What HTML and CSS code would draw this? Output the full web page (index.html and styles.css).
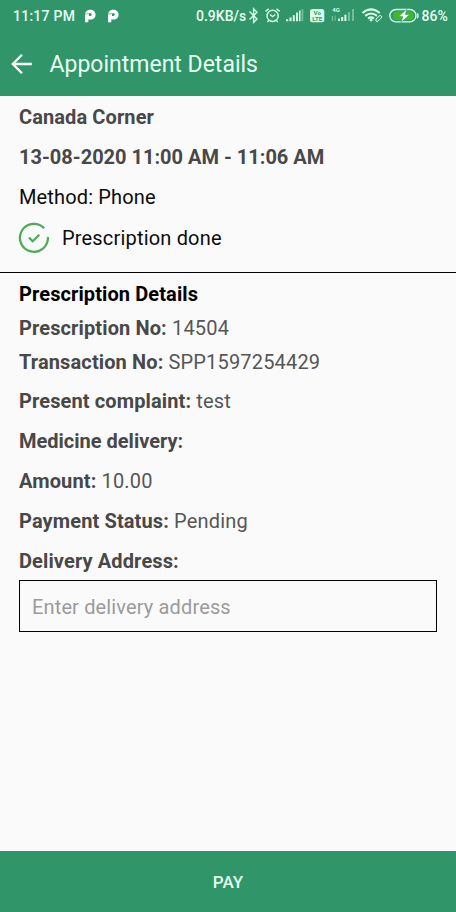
FILE: index.html
```html
<!DOCTYPE html>
<html lang="en">
<head>
<meta charset="utf-8">
<title>Appointment Details</title>
<link rel="stylesheet" href="styles.css">
</head>
<body>
<div class="screen">
  <header class="header">
    <div class="status">
      <span class="time">11:17 PM</span>
      <svg class="app" viewBox="0 0 12 14"><path fill-rule="evenodd" d="M1 13.3V6.2C1 3 3.1.8 6.2.8 9.4.8 11.6 2.9 11.6 5.7S9.4 10.5 6.4 10.5H4.3V13.3ZM4.9 4.2V7H6.3A1.5 1.4 0 0 0 6.3 4.2Z"/><path class="cut" d="M1 5.2L4.9 4.4"/></svg>
      <svg class="app" viewBox="0 0 12 14"><path fill-rule="evenodd" d="M1 13.3V6.2C1 3 3.1.8 6.2.8 9.4.8 11.6 2.9 11.6 5.7S9.4 10.5 6.4 10.5H4.3V13.3ZM4.9 4.2V7H6.3A1.5 1.4 0 0 0 6.3 4.2Z"/><path class="cut" d="M1 5.2L4.9 4.4"/></svg>
      <span class="speed">0.9KB/s</span>
      <svg class="system" viewBox="246 0 174 32">
        <path class="line" d="M249.5 11.6L257 19L253.6 22.4V8.8L257 12.2L249.5 19.6"/>
        <g class="line"><circle cx="272.6" cy="15.9" r="5.6"/><path d="M270 14.5L272.6 16.7L275.3 14.5M265.6 11.4L268.7 8.8M279.6 11.4L276.5 8.8M268.7 20.6L267.4 22M276.5 20.6L277.8 22"/></g>
        <path class="fill" d="M286.2 19.2h2v2h-2zM289.5 17.6h2v3.6h-2zM292.8 15.2h2v6h-2zM296 12.6h2v8.6h-2zM299 10.5h1.5v10.7h-1.5z"/><path class="fill dim" d="M301.5 9.2h1.8v12h-1.8z"/>
        <rect class="fill" x="310" y="9" width="14.3" height="13.3" rx="2.5"/>
        <text class="volte" x="317.2" y="14.9">Vo</text><text class="volte" x="317.2" y="21.3">LTE</text>
        <text class="network" x="332.2" y="11.9">4G</text>
        <path class="fill" d="M338 18.6h2v2.4h-2zM341.2 17h2v4h-2zM344.4 14.8h2v6.2h-2z"/><path class="fill dim" d="M348 12h2v9h-2zM352 9h2v12h-2zM331.8 16h1.3v5h-1.3zM334.6 15.5h1v5.5h-1z"/>
        <g class="wifi"><path d="M362.5 13Q371 5.7 379.7 13M365.2 15.9Q371.1 11.2 377 15.9M368 18.5Q371 16.2 374 18.5"/><path class="fill" d="M369.3 20L371.1 18.3L373 20L371.1 21.8Z"/></g>
        <path class="link" d="M375.9 19.2L378.8 16.2Q380.4 14.8 381.4 16Q382.2 17.2 380.8 18.5L378.1 21Q376.8 22 376 21Q375.2 20 376.6 18.8"/>
        <rect class="battery" x="389.8" y="9.5" width="26.2" height="12.4" rx="6.2"/><path class="tip" d="M417.5 13.2Q418.6 15.7 417.5 18.2"/>
        <rect class="charge" x="393" y="11.5" width="20.5" height="8.4" rx="3"/><path class="bolt" d="M407 8.8L398.8 16.6H402.8L401 22.4L409.8 14.5H405.4Z"/>
      </svg>
      <span class="percent">86%</span>
    </div>
    <div class="toolbar">
      <svg class="back" viewBox="0 0 22 22"><path d="M20.8 11H2M11 1.8L1.8 11L11 20.2"/></svg>
      <h1>Appointment Details</h1>
    </div>
  </header>
  <main>
    <section class="summary">
      <p class="strong place">Canada Corner</p>
      <p class="strong date">13-08-2020 11:00 AM - 11:06 AM</p>
      <p class="method">Method: Phone</p>
      <div class="done">
        <svg viewBox="0 0 32 32"><path d="M26.2 6.3A14 14 0 1 0 29.9 15M11 15.6L14.7 19.3L21.3 12.7"/></svg>
        <span>Prescription done</span>
      </div>
    </section>
    <section class="details">
      <h2>Prescription Details</h2>
      <p class="tight"><b>Prescription No:</b> <span>14504</span></p>
      <p class="tight"><b>Transaction No:</b> <span>SPP1597254429</span></p>
      <p class="complaint"><b>Present complaint:</b> <span>test</span></p>
      <p class="medicine"><b>Medicine delivery:</b></p>
      <p><b>Amount:</b> <span>10.00</span></p>
      <p><b>Payment Status:</b> <span>Pending</span></p>
      <p><b>Delivery Address:</b></p>
      <input type="text" placeholder="Enter delivery address" aria-label="Delivery address">
    </section>
  </main>
  <button class="pay" type="button">PAY</button>
</div>
</body>
</html>
```
FILE: styles.css
```css
* { box-sizing: border-box; }
body { margin: 0; font-family: Roboto, sans-serif; font-size: 20px; color: #484848; }
h1, h2, p { margin: 0; }
.screen { height: 912px; display: flex; flex-direction: column; background: #fafafa; overflow: hidden; }
.header { height: 96px; background: #309569; color: #e6fff2; }
.status { height: 32px; display: flex; align-items: center; padding-left: 13px; font-size: 14px; font-weight: 500; white-space: nowrap; }
.time { width: 71px; letter-spacing: .25px; }
.app { width: 12px; height: 14px; margin-right: 11px; fill: #fff; }
.cut { fill: none; stroke: #309569; stroke-width: .6; }
.speed { width: 50px; margin-left: 66px; }
.system { width: 174px; height: 32px; flex: none; }
.percent { margin-left: 1.5px; }
.line, .link, .wifi, .battery, .tip { fill: none; stroke: #d9ffec; stroke-width: 1.4; }
.wifi { stroke-width: 2; }
.wifi .fill { stroke: none; }
.link { stroke-width: 1; }
.fill { fill: #d9ffec; }
.dim { opacity: .4; }
.volte { font: 700 6px/1 Roboto, sans-serif; fill: #309569; text-anchor: middle; }
.network { font: 700 6px Roboto, sans-serif; fill: #d9ffec; }
.charge { fill: #3fb82d; }
.bolt { fill: #fff; stroke: #309569; stroke-width: .6; }
.toolbar { height: 64px; display: flex; align-items: center; padding-left: 11px; }
.back { width: 22px; height: 22px; margin-right: 16.5px; fill: none; stroke: #fff; stroke-width: 2.3; }
h1 { font-size: 23px; font-weight: 400; white-space: nowrap; padding-top: 1px; }
main { flex: 1; }
.summary { height: 177px; padding: 1px 19px 0; border-bottom: 1px solid #000; }
.summary p { height: 40px; line-height: 40px; }
.strong, b { font-weight: 700; }
.place { letter-spacing: .1px; }
.method, .done { color: #0c0c0c; letter-spacing: .14px; }
.done { height: 41px; display: flex; align-items: center; letter-spacing: .18px; }
.done svg { width: 32px; height: 32px; margin: 0 12px 0 -1px; fill: none; stroke: #4dab55; stroke-width: 2.2; }
.details { padding: 4px 19px 0; letter-spacing: .12px; }
h2 { font-size: 20px; font-weight: 700; color: #000; height: 34px; line-height: 34px; letter-spacing: .1px; }
.details p { height: 40px; line-height: 40px; }
.details span { color: #565656; letter-spacing: .17px; }
.details .tight { height: 33.5px; line-height: 34px; }
.details .complaint { height: 43px; line-height: 46px; }
.medicine { letter-spacing: 0; }
input { display: block; width: 418px; height: 52px; margin: -1px 0 0; padding: 1px 12px 0; border: 1px solid #000; border-radius: 0; background: transparent; font: 20px Roboto, sans-serif; letter-spacing: .14px; }
input::placeholder { color: #9b9b9b; opacity: 1; }
.pay { height: 61px; border: 0; padding: 0; background: #309569; color: #e6fff2; font: 500 17px Roboto, sans-serif; }
```
